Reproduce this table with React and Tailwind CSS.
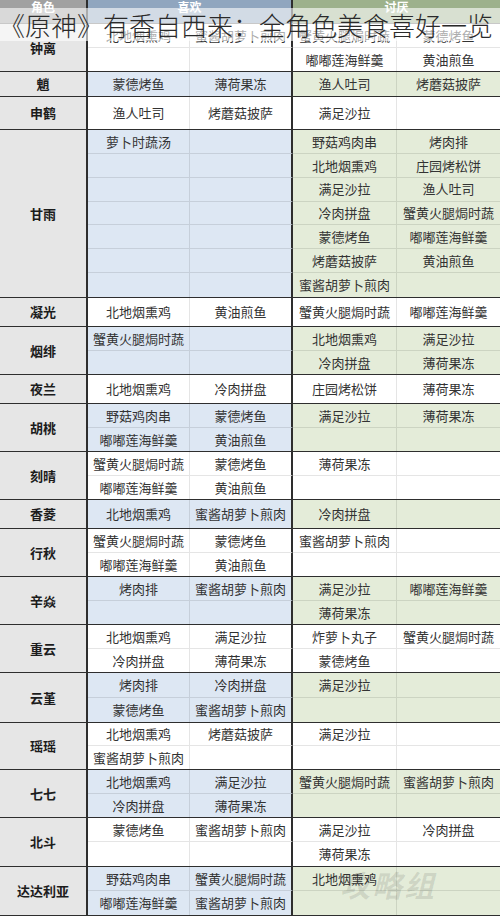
import React from 'react';

const rows = [
  { name: '钟离', h: 'h-[48px]', c: false, subs: [['北地烟熏鸡', '蜜酱胡萝卜煎肉', '蟹黄火腿焗时蔬', '蒙德烤鱼'], ['', '', '嘟嘟莲海鲜羹', '黄油煎鱼']] },
  { name: '魈', h: 'h-[25px]', c: true, subs: [['蒙德烤鱼', '薄荷果冻', '渔人吐司', '烤蘑菇披萨']] },
  { name: '申鹤', h: 'h-[33px]', c: false, subs: [['渔人吐司', '烤蘑菇披萨', '满足沙拉', '']] },
  {
    name: '甘雨', h: 'h-[168px]', c: true, subs: [
      ['萝卜时蔬汤', '', '野菇鸡肉串', '烤肉排'],
      ['', '', '北地烟熏鸡', '庄园烤松饼'],
      ['', '', '满足沙拉', '渔人吐司'],
      ['', '', '冷肉拼盘', '蟹黄火腿焗时蔬'],
      ['', '', '蒙德烤鱼', '嘟嘟莲海鲜羹'],
      ['', '', '烤蘑菇披萨', '黄油煎鱼'],
      ['', '', '蜜酱胡萝卜煎肉', ''],
    ]
  },
  { name: '凝光', h: 'h-[29px]', c: false, subs: [['北地烟熏鸡', '黄油煎鱼', '蟹黄火腿焗时蔬', '嘟嘟莲海鲜羹']] },
  { name: '烟绯', h: 'h-[48px]', c: true, subs: [['蟹黄火腿焗时蔬', '', '北地烟熏鸡', '满足沙拉'], ['', '', '冷肉拼盘', '薄荷果冻']] },
  { name: '夜兰', h: 'h-[29px]', c: false, subs: [['北地烟熏鸡', '冷肉拼盘', '庄园烤松饼', '薄荷果冻']] },
  { name: '胡桃', h: 'h-[48px]', c: true, subs: [['野菇鸡肉串', '蒙德烤鱼', '满足沙拉', '薄荷果冻'], ['嘟嘟莲海鲜羹', '黄油煎鱼', '', '']] },
  { name: '刻晴', h: 'h-[48px]', c: false, subs: [['蟹黄火腿焗时蔬', '蒙德烤鱼', '薄荷果冻', ''], ['嘟嘟莲海鲜羹', '黄油煎鱼', '', '']] },
  { name: '香菱', h: 'h-[29px]', c: true, subs: [['北地烟熏鸡', '蜜酱胡萝卜煎肉', '冷肉拼盘', '']] },
  { name: '行秋', h: 'h-[48px]', c: false, subs: [['蟹黄火腿焗时蔬', '蒙德烤鱼', '蜜酱胡萝卜煎肉', ''], ['嘟嘟莲海鲜羹', '黄油煎鱼', '', '']] },
  { name: '辛焱', h: 'h-[48px]', c: true, subs: [['烤肉排', '蜜酱胡萝卜煎肉', '满足沙拉', '嘟嘟莲海鲜羹'], ['', '', '薄荷果冻', '']] },
  { name: '重云', h: 'h-[48px]', c: false, subs: [['北地烟熏鸡', '满足沙拉', '炸萝卜丸子', '蟹黄火腿焗时蔬'], ['冷肉拼盘', '薄荷果冻', '蒙德烤鱼', '']] },
  { name: '云堇', h: 'h-[50px]', c: true, subs: [['烤肉排', '冷肉拼盘', '满足沙拉', ''], ['蒙德烤鱼', '蜜酱胡萝卜煎肉', '', '']] },
  { name: '瑶瑶', h: 'h-[47px]', c: false, subs: [['北地烟熏鸡', '烤蘑菇披萨', '满足沙拉', ''], ['蜜酱胡萝卜煎肉', '', '', '']] },
  { name: '七七', h: 'h-[48px]', c: true, subs: [['北地烟熏鸡', '满足沙拉', '蟹黄火腿焗时蔬', '蜜酱胡萝卜煎肉'], ['冷肉拼盘', '薄荷果冻', '', '']] },
  { name: '北斗', h: 'h-[49px]', c: false, subs: [['蒙德烤鱼', '蜜酱胡萝卜煎肉', '满足沙拉', '冷肉拼盘'], ['', '', '薄荷果冻', '']] },
  { name: '达达利亚', h: 'h-[49px]', c: true, subs: [['野菇鸡肉串', '蟹黄火腿焗时蔬', '北地烟熏鸡', ''], ['嘟嘟莲海鲜羹', '蜜酱胡萝卜煎肉', '', '']] },
];

function Row({ r }) {
  const blue = r.c ? 'bg-[#dde7f3]' : 'bg-white';
  const green = r.c ? 'bg-[#e4ecd9]' : 'bg-white';
  const last = r.subs.length - 1;
  return (
    <div className={`flex ${r.h} border-b-[1.5px] border-[#2e2e2e]`}>
      <div className="w-[88px] shrink-0 flex items-center justify-center bg-[#e6e6e6] border-r-2 border-[#2e2e2e] font-bold text-[13px] text-[#1c1c1c]">
        {r.name}
      </div>
      <div className="flex-1 flex flex-col">
        {r.subs.map((s, i) => {
          const sep = i < last ? 'border-b border-b-black/10' : '';
          return (
            <div key={i} className="flex-1 grid grid-cols-[102px_103px_104px_1fr] text-[13px] text-[#333]">
              <div className={`${blue} ${sep} border-r border-r-black/10 flex items-center justify-center whitespace-nowrap`}>{s[0]}</div>
              <div className={`${blue} ${sep} border-r-2 border-r-[#2e2e2e] flex items-center justify-center whitespace-nowrap`}>{s[1]}</div>
              <div className={`${green} ${sep} border-r border-r-black/10 flex items-center justify-center whitespace-nowrap`}>{s[2]}</div>
              <div className={`${green} ${sep} flex items-center justify-center whitespace-nowrap`}>{s[3]}</div>
            </div>
          );
        })}
      </div>
    </div>
  );
}

export default function App() {
  return (
    <div className="relative w-[500px] h-[916px] overflow-hidden bg-white font-['Noto_Sans_CJK_SC','Noto_Sans',sans-serif]">
      <div className="flex h-[24px] border-b border-[#777]">
        <div className="w-[88px] shrink-0 bg-[#a1a1a1] border-r-2 border-[#2e2e2e] text-white font-bold text-[12px] leading-none flex justify-center pt-[1px]">角色</div>
        <div className="w-[205px] shrink-0 bg-[#90a6bf] border-r-2 border-[#2e2e2e] text-white font-bold text-[12px] leading-none flex justify-center pt-[1px]">喜欢</div>
        <div className="flex-1 bg-[#9db18c] text-white font-bold text-[12px] leading-none flex justify-center pt-[1px]">讨厌</div>
      </div>
      {rows.map((r) => (
        <Row key={r.name} r={r} />
      ))}
      <div className="absolute left-0 right-0 top-[8px] h-[33px] bg-white/60 flex items-center overflow-hidden">
        <span className="whitespace-nowrap text-[26px] leading-none font-light text-[#2a2a2a] -ml-[1px]">《原神》有香自西来：全角色美食喜好一览</span>
      </div>
      <div className="absolute left-[340px] top-[862px] text-[30px] font-bold italic text-black/10 whitespace-nowrap tracking-[2px] pointer-events-none">
        攻略组
      </div>
    </div>
  );
}
